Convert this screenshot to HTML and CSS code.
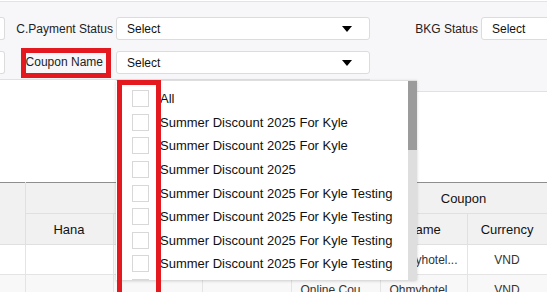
FILE: index.html
```html
<!DOCTYPE html>
<html>
<head>
<meta charset="utf-8">
<link rel="stylesheet" href="styles.css">
</head>
<body>
<div class="page">
  <div class="filters">
    <div class="filters-main">
      <div class="frow">
        <div class="stub"></div>
        <label class="flabel">C.Payment Status</label>
        <div class="select"><span>Select</span><i class="caret"></i></div>
      </div>
      <div class="frow">
        <div class="stub"></div>
        <label class="flabel"><span class="mark">Coupon Name</span></label>
        <div class="select">
          <span>Select</span><i class="caret"></i>
          <div class="dropdown">
            <div class="list">
              <div class="item"><span class="cb"></span><span>All</span></div>
              <div class="item"><span class="cb"></span><span>Summer Discount 2025 For Kyle</span></div>
              <div class="item"><span class="cb"></span><span>Summer Discount 2025 For Kyle</span></div>
              <div class="item"><span class="cb"></span><span>Summer Discount 2025</span></div>
              <div class="item"><span class="cb"></span><span>Summer Discount 2025 For Kyle Testing</span></div>
              <div class="item"><span class="cb"></span><span>Summer Discount 2025 For Kyle Testing</span></div>
              <div class="item"><span class="cb"></span><span>Summer Discount 2025 For Kyle Testing</span></div>
              <div class="item"><span class="cb"></span><span>Summer Discount 2025 For Kyle Testing</span></div>
              <div class="item"><span class="cb"></span><span>Summer Discount 2025 For Kyle Testing</span></div>
            </div>
            <div class="scrollbar"><div class="thumb"></div></div>
            <div class="mark-box"></div>
          </div>
        </div>
      </div>
    </div>
    <div class="filters-side">
      <div class="frow">
        <label class="flabel side">BKG Status</label>
        <div class="select wide"><span>Select</span></div>
      </div>
    </div>
  </div>

  <table class="grid">
    <colgroup>
      <col class="c0"><col class="c1"><col class="c2"><col class="c3"><col class="c4"><col class="c5"><col class="c6">
    </colgroup>
    <thead>
      <tr>
        <th rowspan="2"></th>
        <th colspan="3"></th>
        <th></th>
        <th colspan="2">Coupon</th>
      </tr>
      <tr>
        <th>Hana</th>
        <th></th>
        <th></th>
        <th>Coupon Type</th>
        <th>Name</th>
        <th>Currency</th>
      </tr>
    </thead>
    <tbody>
      <tr>
        <td></td><td></td><td></td><td></td><td>Online Cou...</td><td>Ohmyhotel...</td><td>VND</td>
      </tr>
      <tr class="alt">
        <td></td><td></td><td></td><td></td><td>Online Cou...</td><td>Ohmyhotel...</td><td>VND</td>
      </tr>
    </tbody>
  </table>
</div>
</body>
</html>
```
FILE: styles.css
```css
html, body {
  margin: 0;
  padding: 0;
  background: #ffffff;
  overflow: hidden;
}
body {
  font-family: "Liberation Sans", Arial, sans-serif;
  color: #222;
}
.page {
  width: 547px;
  height: 292px;
  overflow: hidden;
  padding-top: 1px;
  box-sizing: border-box;
  background: #fff;
}
.filters {
  display: flex;
  align-items: flex-start;
  background: #fff;
  border-top: 1px solid #e3e3e6;
}
.filters-main {
  width: 370px;
  padding: 15px 0 5px;
  display: flex;
  flex-direction: column;
  gap: 11px;
  background: #f7f6f9;
  border-bottom: 1px solid #e1e1e4;
}
.filters-side {
  flex: 1;
  padding: 15px 0 51px;
  background: #f7f6f9;
  border-bottom: 1px solid #e1e1e4;
}
.frow {
  display: flex;
  align-items: center;
  height: 23px;
}
.stub {
  width: 5px;
  height: 23px;
  box-sizing: border-box;
  background: #fff;
  border: 1px solid #dcdcdc;
  border-left: none;
  border-radius: 0 3px 3px 0;
}
.flabel {
  width: 111px;
  box-sizing: border-box;
  text-align: right;
  padding-right: 3px;
  font-size: 12px;
  color: #222;
  white-space: nowrap;
}
.mark {
  display: inline-block;
  border: 5px solid #e3191f;
  padding: 2px 3px 3px 0;
  margin-right: 2px;
  line-height: 15px;
}
.select {
  position: relative;
  width: 254px;
  height: 23px;
  box-sizing: border-box;
  background: #fff;
  border: 1px solid #dcdcdc;
  border-radius: 3px;
  display: flex;
  align-items: center;
  justify-content: space-between;
  padding: 0 17px 0 10px;
  font-size: 12px;
  color: #111;
}
.select.wide {
  width: 120px;
  flex: none;
}
.caret {
  width: 0;
  height: 0;
  border-left: 5px solid transparent;
  border-right: 5px solid transparent;
  border-top: 6px solid #000;
}
.dropdown {
  position: absolute;
  left: -1px;
  top: 28px;
  width: 301px;
  height: 199px;
  background: #fff;
  border-top: 1px solid #dedede;
  box-shadow: 0 1px 3px rgba(0, 0, 0, 0.18);
  display: flex;
  z-index: 10;
}
.list {
  flex: 1;
  overflow: hidden;
  padding-top: 6px;
}
.item {
  height: 23.6px;
  display: flex;
  align-items: center;
  gap: 11px;
  padding-left: 16px;
  font-size: 13px;
  color: #111;
  white-space: nowrap;
}
.cb {
  width: 17px;
  height: 17px;
  box-sizing: border-box;
  border: 1px solid #d8d8d8;
  background: #fff;
  flex: none;
}
.scrollbar {
  width: 9px;
  background: #dedede;
  flex: none;
}
.thumb {
  height: 69px;
  background: #9b9b9b;
}
.mark-box {
  position: absolute;
  left: 1px;
  top: -1px;
  width: 44px;
  height: 220px;
  box-sizing: border-box;
  border: 5px solid #e3191f;
}
.grid {
  margin-top: 90px;
  width: 547px;
  table-layout: fixed;
  border-collapse: collapse;
  background: #fff;
  border-top: 1px solid #8e8e8e;
}
.c0 { width: 25px; }
.c1 { width: 88px; }
.c2 { width: 89px; }
.c3 { width: 89px; }
.c4 { width: 89px; }
.c5 { width: 87px; }
.c6 { width: 80px; }
.grid th {
  background: #f1f1f1;
  font-weight: normal;
  font-size: 13px;
  color: #111;
  height: 30px;
  padding: 0 6px;
  border: 1px solid #e0e0e0;
  border-top: none;
  white-space: nowrap;
  overflow: hidden;
  text-overflow: ellipsis;
}
.grid thead tr:first-child th:first-child {
  border-left: none;
}
.grid td {
  height: 29px;
  padding: 0 4px;
  font-size: 12px;
  color: #333;
  text-align: center;
  border: 1px solid #e4e4e4;
  white-space: nowrap;
  overflow: hidden;
  text-overflow: ellipsis;
}
.grid tr td:first-child {
  border-left: none;
}
.grid tr.alt td {
  background: #f8f8f8;
}
```
